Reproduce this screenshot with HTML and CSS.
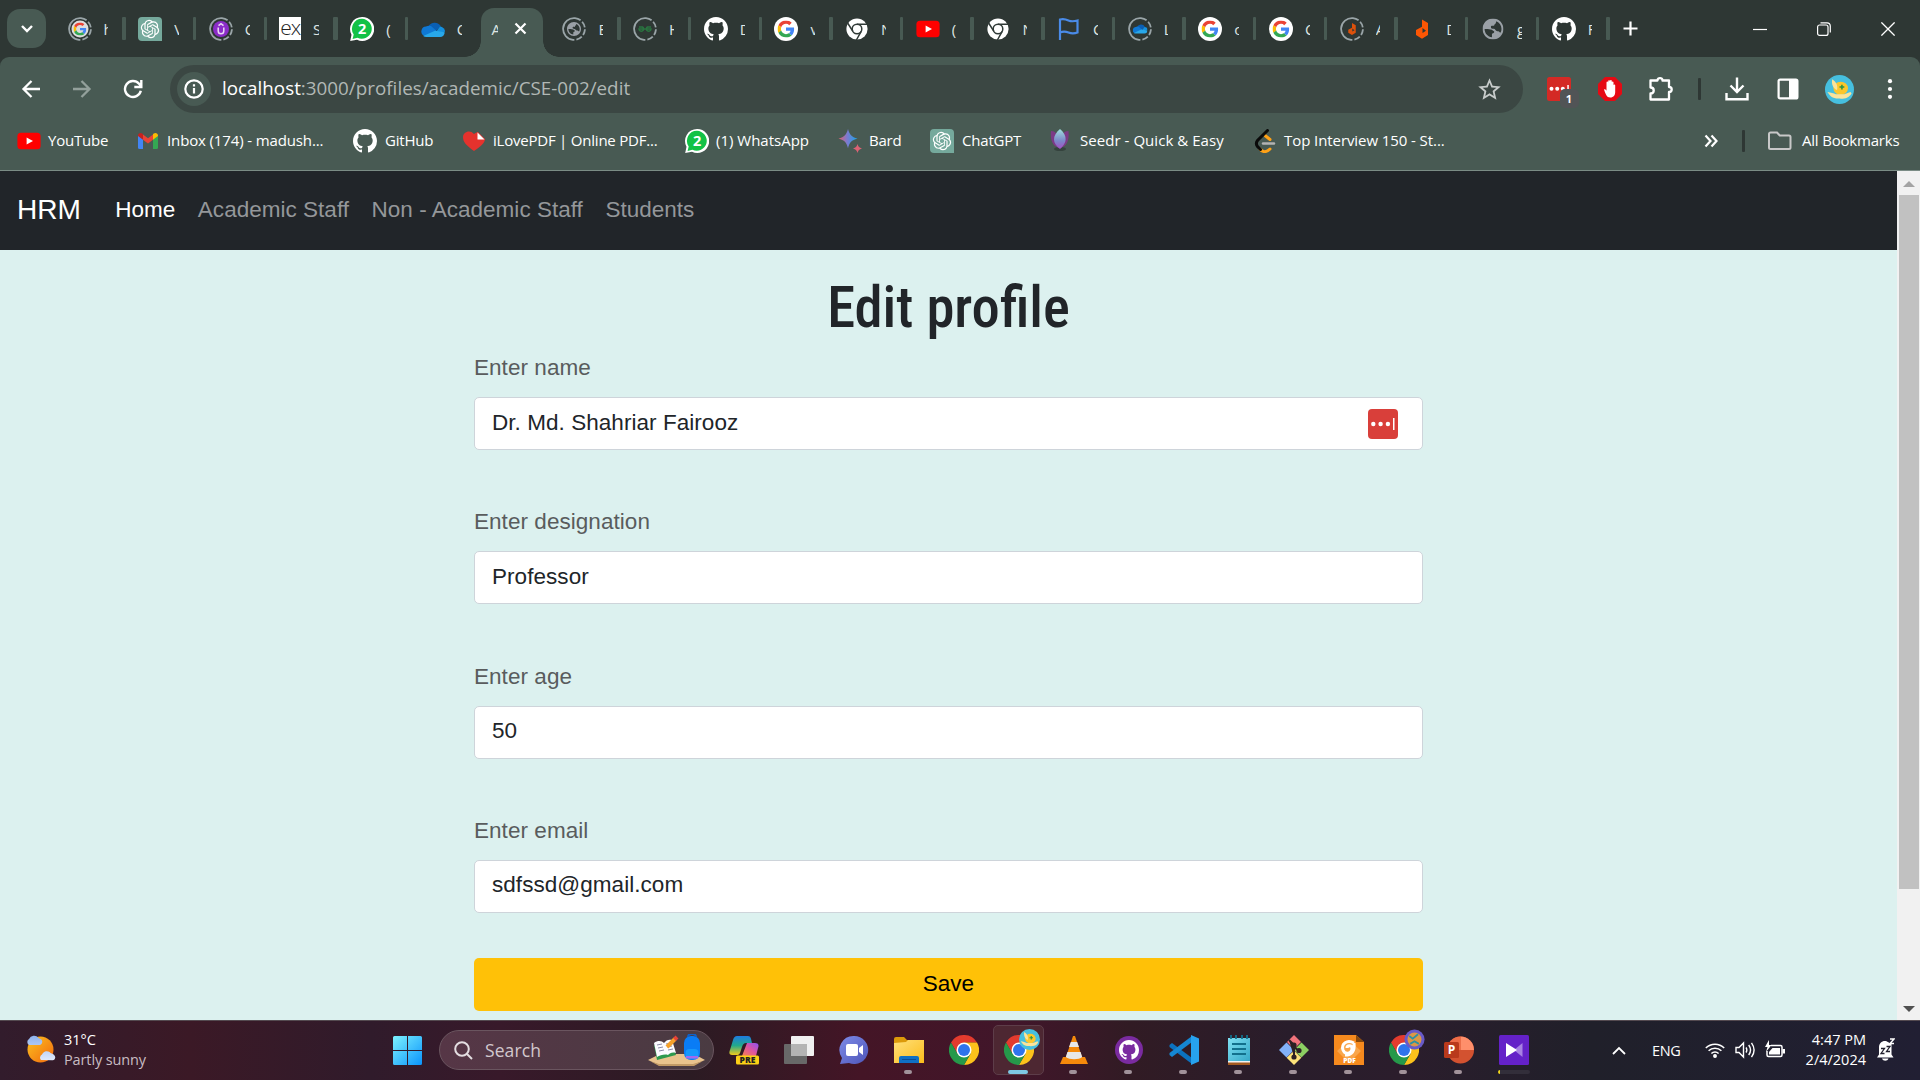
FILE: index.html
```
<!DOCTYPE html>
<html lang="en">
<head>
<meta charset="utf-8">
<title>Edit profile</title>
<link rel="stylesheet" href="styles.css">
</head>
<body>
<svg class="defs" width="0" height="0" aria-hidden="true">
  <defs>
    <linearGradient id="win" x1="0" y1="0" x2="1" y2="1"><stop offset="0" stop-color="#7df3ff"/><stop offset="1" stop-color="#0a93fb"/></linearGradient>
    <linearGradient id="bardg" x1="0" y1="0" x2="1" y2="0"><stop offset="0" stop-color="#e0606c"/><stop offset=".45" stop-color="#7c7ad0"/><stop offset="1" stop-color="#18a5e8"/></linearGradient>
    <linearGradient id="seed" x1="0" y1="0" x2="0" y2="1"><stop offset="0" stop-color="#9fe0dd"/><stop offset=".6" stop-color="#7b86c8"/><stop offset="1" stop-color="#a44fc4"/></linearGradient>
    <linearGradient id="sun" x1="0" y1="0" x2="1" y2="1"><stop offset="0" stop-color="#fcc321"/><stop offset="1" stop-color="#f2680c"/></linearGradient>
    <linearGradient id="cloud" x1="0" y1="0" x2="0" y2="1"><stop offset="0" stop-color="#8eb2ee"/><stop offset="1" stop-color="#dfe9fb"/></linearGradient>
    <linearGradient id="cop1" x1="0" y1="0" x2="0" y2="1"><stop offset="0" stop-color="#1e7be0"/><stop offset=".5" stop-color="#22a98c"/><stop offset="1" stop-color="#f1cc1c"/></linearGradient>
    <linearGradient id="cop2" x1="0" y1="1" x2="1" y2="0"><stop offset="0" stop-color="#f5824f"/><stop offset=".5" stop-color="#e0559c"/><stop offset="1" stop-color="#8c52f5"/></linearGradient>
    <linearGradient id="folderg" x1="0" y1="0" x2="1" y2="1"><stop offset="0" stop-color="#ffe07a"/><stop offset="1" stop-color="#fbbc1b"/></linearGradient>
    <linearGradient id="chatg" x1="0" y1="0" x2="1" y2="1"><stop offset="0" stop-color="#7d8be8"/><stop offset="1" stop-color="#4e55b8"/></linearGradient>
    <linearGradient id="noteg" x1="0" y1="0" x2="1" y2="1"><stop offset="0" stop-color="#7fe0f2"/><stop offset="1" stop-color="#35a8c8"/></linearGradient>

    <symbol id="google" viewBox="0 0 48 48"><path fill="#EA4335" d="M24 9.5c3.54 0 6.71 1.22 9.21 3.6l6.85-6.85C35.9 2.38 30.47 0 24 0 14.62 0 6.51 5.38 2.56 13.22l7.98 6.19C12.43 13.72 17.74 9.5 24 9.5z"/><path fill="#4285F4" d="M46.98 24.55c0-1.57-.15-3.09-.38-4.55H24v9.02h12.94c-.58 2.96-2.26 5.48-4.78 7.18l7.73 6c4.51-4.18 7.09-10.36 7.09-17.65z"/><path fill="#FBBC05" d="M10.53 28.59c-.48-1.45-.76-2.99-.76-4.59s.27-3.14.76-4.59l-7.98-6.19C.92 16.46 0 20.12 0 24c0 3.88.92 7.54 2.56 10.78l7.97-6.19z"/><path fill="#34A853" d="M24 48c6.48 0 11.93-2.13 15.89-5.81l-7.73-6c-2.15 1.45-4.92 2.3-8.16 2.3-6.26 0-11.57-4.22-13.47-9.91l-7.98 6.19C6.51 42.62 14.62 48 24 48z"/></symbol>
    <symbol id="googlew" viewBox="0 0 24 24"><circle cx="12" cy="12" r="12" fill="#fff"/><use href="#google" x="3.5" y="3.5" width="17" height="17"/></symbol>
    <symbol id="ring" viewBox="0 0 24 24"><circle cx="12" cy="12" r="10.9" fill="none" stroke="#9aa5a8" stroke-width="1.8" pathLength="100" stroke-dasharray="9 3 9 3 9 3 9 3 52 0" transform="rotate(-85 12 12)"/></symbol>
    <symbol id="github" viewBox="0 0 16 16"><path fill="#fff" d="M8 0C3.58 0 0 3.58 0 8c0 3.54 2.29 6.53 5.47 7.59.4.07.55-.17.55-.38 0-.19-.01-.82-.01-1.49-2.01.37-2.53-.49-2.69-.94-.09-.23-.48-.94-.82-1.13-.28-.15-.68-.52-.01-.53.63-.01 1.08.58 1.23.82.72 1.21 1.87.87 2.33.66.07-.52.28-.87.51-1.07-1.78-.2-3.64-.89-3.64-3.95 0-.87.31-1.59.82-2.15-.08-.2-.36-1.02.08-2.12 0 0 .67-.21 2.2.82.64-.18 1.32-.27 2-.27s1.36.09 2 .27c1.53-1.04 2.2-.82 2.2-.82.44 1.1.16 1.92.08 2.12.51.56.82 1.27.82 2.15 0 3.07-1.87 3.75-3.65 3.95.29.25.54.73.54 1.48 0 1.07-.01 1.93-.01 2.2 0 .21.15.46.55.38A8.01 8.01 0 0 0 16 8c0-4.42-3.58-8-8-8z"/></symbol>
    <symbol id="gpt" viewBox="0 0 24 24"><path fill="#75a99c" d="M4 0h16a4 4 0 0 1 4 4v20H4a4 4 0 0 1-4-4V4a4 4 0 0 1 4-4z"/><g transform="translate(2.8 2.8) scale(.766)"><path fill="#fff" d="M22.2819 9.8211a5.9847 5.9847 0 0 0-.5157-4.9108 6.0462 6.0462 0 0 0-6.5098-2.9A6.0651 6.0651 0 0 0 4.9807 4.1818a5.9847 5.9847 0 0 0-3.9977 2.9 6.0462 6.0462 0 0 0 .7427 7.0966 5.98 5.98 0 0 0 .511 4.9107 6.051 6.051 0 0 0 6.5146 2.9001A5.9847 5.9847 0 0 0 13.2599 24a6.0557 6.0557 0 0 0 5.7718-4.2058 5.9894 5.9894 0 0 0 3.9977-2.9001 6.0557 6.0557 0 0 0-.7475-7.0729zm-9.022 12.6081a4.4755 4.4755 0 0 1-2.8764-1.0408l.1419-.0804 4.7783-2.7582a.7948.7948 0 0 0 .3927-.6813v-6.7369l2.02 1.1686a.071.071 0 0 1 .038.052v5.5826a4.504 4.504 0 0 1-4.4945 4.4944zm-9.6607-4.1254a4.4708 4.4708 0 0 1-.5346-3.0137l.142.0852 4.783 2.7582a.7712.7712 0 0 0 .7806 0l5.8428-3.3685v2.3324a.0804.0804 0 0 1-.0332.0615L9.74 19.9502a4.4992 4.4992 0 0 1-6.1408-1.6464zM2.3408 7.8956a4.485 4.485 0 0 1 2.3655-1.9728V11.6a.7664.7664 0 0 0 .3879.6765l5.8144 3.3543-2.0201 1.1685a.0757.0757 0 0 1-.071 0l-4.8303-2.7865A4.504 4.504 0 0 1 2.3408 7.872zm16.5963 3.8558L13.1038 8.364 15.1192 7.2a.0757.0757 0 0 1 .071 0l4.8303 2.7913a4.4944 4.4944 0 0 1-.6765 8.1042v-5.6772a.79.79 0 0 0-.407-.667zm2.0107-3.0231l-.142-.0852-4.7735-2.7818a.7759.7759 0 0 0-.7854 0L9.409 9.2297V6.8974a.0662.0662 0 0 1 .0284-.0615l4.8303-2.7866a4.4992 4.4992 0 0 1 6.6802 4.66zM8.3065 12.863l-2.02-1.1638a.0804.0804 0 0 1-.038-.0567V6.0742a4.4992 4.4992 0 0 1 7.3757-3.4537l-.142.0805L8.704 5.459a.7948.7948 0 0 0-.3927.6813zm1.0976-2.3654l2.602-1.4998 2.6069 1.4998v2.9994l-2.5974 1.4997-2.6067-1.4997Z"/></g></symbol>
    <symbol id="whatsapp" viewBox="0 0 24 24"><path fill="#fff" d="M12 0a12 12 0 1 1-5 22.8L.2 24l1.3-6.2A12 12 0 0 1 12 0z"/><path fill="#12c246" d="M12 1.8a10 10 0 1 1-4.6 19L2.6 22l1.1-4.6A10 10 0 0 1 12 1.8z"/><text x="12.2" y="17.2" text-anchor="middle" font-family="Open Sans, sans-serif" font-size="14.5" font-weight="700" fill="#fff">2</text></symbol>
    <symbol id="onedrive" viewBox="0 0 24 24"><path fill="#0a5fb4" d="M7 10.5a7 7 0 0 1 12.8-1.2L14 15z"/><path fill="#0f78d4" d="M5 9.6A6 6 0 0 1 10 9l9 8-16 2A5 5 0 0 1 5 9.6z"/><path fill="#1490df" d="M19 9.6a5 5 0 0 1 5 5.2l-10 1.4z"/><path fill="#28a8ea" d="M2.2 19 14 13.7l9.7 1.6A4.6 4.6 0 0 1 19 20H5.5a5 5 0 0 1-3.3-1z"/></symbol>
    <symbol id="chromew" viewBox="0 0 24 24"><circle cx="12" cy="12" r="10.6" fill="#fff"/><g fill="none" stroke="#303a37" stroke-width="1.5"><circle cx="12" cy="12" r="4.8"/><path d="M12 7.2h10M7.9 14.4 2.6 6M16.2 14.4 11.4 23"/></g></symbol>
    <symbol id="chrome" viewBox="0 0 24 24"><path fill="#e33b2e" d="M12 6H22.4A12 12 0 0 0 1.6 6L6.8 15z"/><path fill="#fcc21b" d="M12 6H22.4A12 12 0 0 1 12 24L17.2 15z"/><path fill="#25994a" d="M1.6 6A12 12 0 0 0 12 24L17.2 15H6.8z"/><circle cx="12" cy="12" r="6" fill="#fff"/><circle cx="12" cy="12" r="4.8" fill="#2f74ec"/></symbol>
    <symbol id="youtube" viewBox="0 0 24 24"><rect x=".4" y="3.7" width="23.2" height="16.6" rx="3.5" fill="#f00"/><path fill="#fff" d="m9.6 8.5 6.4 3.5-6.4 3.5z"/></symbol>
    <symbol id="globe" viewBox="2 2 20 20"><path fill="currentColor" d="M12 2C6.480 2 2 6.480 2 12s4.480 10 10 10 10-4.480 10-10S17.520 2 12 2zm-1 17.930c-3.950-.490-7-3.850-7-7.930h3l4 .6c1 1.200 2.200 1 2.200 2.200s-2.200 1-2.200 2.100v3.030zm8.300-4.500c-1.100-.2-1.300-1.400-2.300-1.400h-1c-1.500 0-1.800-2.200-3.300-2.200-1.700 0-2.700-.3-2.700-1.800S11.500 9 12.600 9c1 0 .6-1.900 1.800-2l.8-2.300c2.900 1.200 4.900 4 4.900 7.300 0 1.200-.3 2.400-.8 3.430z"/></symbol>
    <symbol id="adon" viewBox="0 0 24 24"><path fill="#fc5604" d="M12 2.500 18 6v12l-6 3.700L6 18v-5l6-3.200zM12.500 11v5l3.500-2.200z" fill-rule="evenodd"/></symbol>
    <symbol id="bird" viewBox="0 0 24 24"><circle cx="12" cy="12" r="12" fill="#46bfdf"/><ellipse cx="13" cy="11" rx="6" ry="5.500" fill="#fbc62c"/><path fill="#fbe39a" d="M2 14c3 .5 5 1 7 2l7 0 5-2 1 1c-2 4-6 5-11 4.500-5 0-7-2.500-9-5.500zM6 3.500c3 2 5 5 4 9-3-1-5-5-4-9z"/><path stroke="#2a9444" stroke-width="1.300" d="M12 10h4m-2-2v4"/></symbol>
    <symbol id="meme" viewBox="0 0 24 24"><circle cx="12" cy="12" r="11.500" fill="#685ac8"/><circle cx="12" cy="12" r="8" fill="#dc9846"/><path stroke="#2b92a4" stroke-width="2" fill="none" d="m6 8 4 3 6-5M7 17l5-3 5 3"/></symbol>
  </defs>
</svg>

<header class="browser">
  <div class="tabstrip">
    <button class="tabsearch"><svg width="14" height="9" viewBox="0 0 14 9"><path d="m2 2 5 5 5-5" fill="none" stroke="#fff" stroke-width="2.400"/></svg></button>
    <div class="tab"><svg class="fav"><use href="#ring"/><circle cx="12" cy="12" r="8.500" fill="#ddd"/><use href="#google" x="5.500" y="5.500" width="13" height="13"/></svg><span>h</span></div>
    <div class="tab"><svg class="fav"><use href="#gpt"/></svg><span>V</span></div>
    <div class="tab"><svg class="fav"><use href="#ring"/><circle cx="12" cy="12" r="8" fill="#8b2cc8"/><path d="M9.200 10.500v3.500a2.800 2.800 0 0 0 5.600 0v-3.500M9.500 8.600 12 6.700l2.500 1.900" fill="none" stroke="#e9d8f5" stroke-width="1.500"/></svg><span>C</span></div>
    <div class="tab"><div class="exlogo">ex</div><span>S</span></div>
    <div class="tab"><svg class="fav"><use href="#whatsapp"/></svg><span>(</span></div>
    <div class="tab nosep"><svg class="fav"><use href="#onedrive"/></svg><span>C</span></div>
    <div class="tab active"><span>A</span><svg width="13" height="13" viewBox="0 0 13 13"><path d="m1.500 1.500 10 10m0-10-10 10" stroke="#fff" stroke-width="2.200"/></svg></div>
    <div class="tab"><svg class="fav dim"><use href="#ring"/><use href="#globe" x="5" y="5" width="14" height="14"/></svg><span>E</span></div>
    <div class="tab"><svg class="fav"><use href="#ring"/><path d="M6 10h3.500a2.300 2.300 0 1 1-3.500 2h12a2.300 2.300 0 1 1-3.500-2H18" fill="none" stroke="#2a7440" stroke-width="1.500"/></svg><span>H</span></div>
    <div class="tab"><svg class="fav"><use href="#github"/></svg><span>D</span></div>
    <div class="tab"><svg class="fav"><use href="#googlew"/></svg><span>v</span></div>
    <div class="tab"><svg class="fav"><use href="#chromew"/></svg><span>N</span></div>
    <div class="tab"><svg class="fav"><use href="#youtube"/></svg><span>(</span></div>
    <div class="tab"><svg class="fav"><use href="#chromew"/></svg><span>N</span></div>
    <div class="tab"><svg class="fav"><path d="M3 23V2.500c3-1 5-.7 8.500 1 3 1.300 5.500 1 9 0v12c-3.500 1.300-6 1.200-9 0-3.500-1.300-5.500-1.200-8.500 0" fill="none" stroke="#4a8be8" stroke-width="2.200"/></svg><span>C</span></div>
    <div class="tab"><svg class="fav"><use href="#ring"/><use href="#onedrive" x="4.500" y="4" width="15" height="15"/></svg><span>L</span></div>
    <div class="tab"><svg class="fav"><use href="#googlew"/></svg><span>c</span></div>
    <div class="tab"><svg class="fav"><use href="#googlew"/></svg><span>C</span></div>
    <div class="tab"><svg class="fav"><use href="#ring"/><use href="#adon" x="4.500" y="4.500" width="15" height="15" opacity=".85"/></svg><span>A</span></div>
    <div class="tab"><svg class="fav"><use href="#adon"/></svg><span>D</span></div>
    <div class="tab"><svg class="fav dim"><use href="#globe" x="1.500" y="1.500" width="21" height="21"/></svg><span>g</span></div>
    <div class="tab"><svg class="fav"><use href="#github"/></svg><span>F</span></div>
    <svg class="newtab" width="15" height="15" viewBox="0 0 15 15"><path d="M7.500 .5v14M.5 7.500h14" stroke="#fff" stroke-width="2.200"/></svg>
    <div class="winbtns">
      <svg width="14" height="14" viewBox="0 0 14 14"><path d="M0 7.500h14" stroke="#fff" stroke-width="1.200"/></svg>
      <svg width="14" height="14" viewBox="0 0 14 14" fill="none" stroke="#fff" stroke-width="1.200"><rect x=".6" y="3" width="10.400" height="10.400" rx="2"/><path d="M3.500 .8H10A3.300 3.300 0 0 1 13.300 4v6.500"/></svg>
      <svg width="14" height="14" viewBox="0 0 14 14"><path d="m.4.4 13.200 13.200m0-13.200L.4 13.600" stroke="#fff" stroke-width="1.300"/></svg>
    </div>
  </div>

  <div class="toolbar">
    <div class="navbtns">
      <svg width="20" height="20" viewBox="0 0 20 20" fill="none" stroke="#fff" stroke-width="2.300"><path d="M19 10H3M10.500 2 2.500 10l8 8"/></svg>
      <svg width="20" height="20" viewBox="0 0 20 20" fill="none" stroke="#93a09b" stroke-width="2.300"><path d="M1 10h16M9.500 2l8 8-8 8"/></svg>
      <svg width="20" height="20" viewBox="0 0 20 20" fill="none" stroke="#fff" stroke-width="2.400"><path d="M17.800 11.800A8 8 0 1 1 16 4.700L18 6.800M18.300 1v7h-7"/></svg>
    </div>
    <div class="omnibox">
      <div class="info"><svg width="20" height="20" viewBox="0 0 20 20"><circle cx="10" cy="10" r="8.700" fill="none" stroke="#fff" stroke-width="2.200"/><path d="M10 9v5.500M10 5.300v2.200" stroke="#fff" stroke-width="2.200"/></svg></div>
      <div class="url"><b>localhost</b>:3000/profiles/academic/CSE-002/edit</div>
      <svg class="star" width="27" height="27" viewBox="0 0 24 24"><path fill="#c8cccb" d="M22 9.240l-7.190-.620L12 2 9.190 8.630 2 9.240l5.460 4.730L5.820 21 12 17.270 18.180 21l-1.630-7.030L22 9.240zM12 15.400l-3.760 2.270 1-4.280-3.320-2.880 4.380-.380L12 6.100l1.710 4.040 4.380.380-3.320 2.880 1 4.280L12 15.400z"/></svg>
    </div>
    <div class="exts">
      <div class="ext"><svg width="24" height="24" viewBox="0 0 24 24"><rect width="24" height="24" rx="2.500" fill="#d42a25"/><g fill="#fff"><circle cx="4.500" cy="11.800" r="2"/><circle cx="10.200" cy="11.800" r="2"/><circle cx="15.800" cy="11.800" r="2"/><path d="M20.300 8h1.500v7h-1.500z"/></g></svg><span class="badge">1</span></div>
      <div class="ext"><svg width="24" height="24" viewBox="0 0 24 24"><path fill="#e60a14" d="M7 0h10l7 7v10l-7 7H7l-7-7V7z"/><path fill="#fff" d="M6 12.500c1.300-.8 2 .3 2.500 1.200V5.500c0-1.200 1.700-1.200 1.700 0V4.200c0-1.300 1.800-1.300 1.800 0v-.4c0-1.200 1.800-1.200 1.800 0v1.500c0-1.200 1.700-1.200 1.700 0v3c0-1.200 1.700-1.200 1.700 0V15c0 3-1.500 5.500-5 5.500-3.600 0-4.500-3.500-6.200-8z"/></svg></div>
      <div class="ext"><svg width="26" height="26" viewBox="0 0 26 26"><path fill="none" stroke="#fff" stroke-width="2.300" stroke-linejoin="round" d="M2.500 4.500H9.500C9.300 1.200 14.700 1.200 14.500 4.500H21V11C24.600 11 24.600 16 21 16V23.500H2.500V17.500C6.800 17.500 6.800 11.500 2.500 11.500Z"/></svg></div>
      <i class="divider"></i>
      <div class="ext"><svg width="24" height="24" viewBox="0 0 24 24"><path fill="none" stroke="#fff" stroke-width="2.400" d="M12 .500v14M5.500 8.500l6.500 6.500 6.500-6.500M1.500 16v6.300h21V16"/></svg></div>
      <div class="ext"><svg width="22" height="22" viewBox="0 0 22 22"><rect x="1.600" y="1.600" width="18.800" height="18.800" rx="1.500" fill="none" stroke="#fff" stroke-width="2.200"/><path fill="#fff" d="M12 1h8v20h-8z"/></svg></div>
      <div class="ext"><svg width="29" height="29"><use href="#bird"/></svg></div>
      <div class="ext"><svg width="6" height="20" viewBox="0 0 6 20" fill="#fff"><circle cx="3" cy="2.200" r="2.100"/><circle cx="3" cy="10" r="2.100"/><circle cx="3" cy="17.800" r="2.100"/></svg></div>
    </div>
  </div>

  <div class="bookmarks">
    <div class="bm b1"><svg class="fav"><use href="#youtube"/></svg><span>YouTube</span></div>
    <div class="bm b2"><svg class="fav" viewBox="0 0 24 24"><path fill="#4285f4" d="M2 6.500l5 3.800V20H3.500A1.500 1.500 0 0 1 2 18.500z"/><path fill="#34a853" d="M22 6.500l-5 3.800V20h3.500a1.500 1.500 0 0 0 1.500-1.500z"/><path fill="#ea4335" d="M7 5.500l5 3.800 5-3.800v5.300L12 14.600 7 10.800z"/><path fill="#c5221f" d="M2 6.700C2 4.200 4.600 3.300 6.300 4.600L7 5.200v5.600l-5-3.700z"/><path fill="#fbbc04" d="M22 6.700c0-2.500-2.600-3.400-4.300-2.100l-.7.600v5.600l5-3.700z"/></svg><span>Inbox (174) - madush...</span></div>
    <div class="bm b3"><svg class="fav"><use href="#github"/></svg><span>GitHub</span></div>
    <div class="bm b4"><svg class="fav" viewBox="0 0 24 24"><path fill="#e5322d" d="M12 22C4 16 1 13 1 8c0-5 7-8 11-3 3-2 4-2 4-2l7 7c0 4-5 8-11 12z"/><path fill="#fff" d="M15.500 3.500l7 7h-7z"/></svg><span>iLovePDF | Online PDF...</span></div>
    <div class="bm b5"><svg class="fav"><use href="#whatsapp"/></svg><span>(1) WhatsApp</span></div>
    <div class="bm b6"><svg class="fav" viewBox="0 0 24 24"><path fill="url(#bardg)" d="M10 0c1.500 5.500 3.500 8 9.500 9.600-6 1.600-8 4.100-9.500 9.600C8.500 13.700 6.500 11.200.5 9.600 6.500 8 8.500 5.500 10 0z"/><path fill="#dc6274" d="M19.500 15c.8 2.800 1.700 3.700 4.500 4.500-2.800.8-3.700 1.700-4.500 4.500-.8-2.800-1.700-3.700-4.500-4.500 2.800-.8 3.700-1.700 4.500-4.500z"/></svg><span>Bard</span></div>
    <div class="bm b7"><svg class="fav"><use href="#gpt"/></svg><span>ChatGPT</span></div>
    <div class="bm b8"><svg class="fav" viewBox="0 0 24 24"><ellipse cx="12" cy="20" rx="6" ry="2" fill="#35433e"/><path fill="#7c3a86" d="M3 2c6 0 8 6 8 17C5 17 2 12 3 2zM20.500 2c-6 0-8 6-8 17 6-2 9-7 8-17z"/><path fill="url(#seed)" d="M12 0c8 7 7 14 0 20C4 14 4 7 12 0z"/></svg><span>Seedr - Quick &amp; Easy</span></div>
    <div class="bm b9"><svg class="fav" viewBox="0 0 24 24" fill="none" stroke-width="3" stroke-linecap="round"><path stroke="#ffa116" d="M12 6.500l5 4M7 20c3 4 7 3 10 0"/><path stroke="#0a0a0a" d="M14.500 1.500L4.500 11.500c-1.500 2-1.500 4 0 6l3 3"/><path stroke="#b3b3b3" stroke-width="2.400" d="M10 14.500h11"/></svg><span>Top Interview 150 - St...</span></div>
    <div class="bmend">
      <svg width="14" height="14" viewBox="0 0 14 14" fill="none" stroke="#fff" stroke-width="2.200"><path d="m1.500 1.500 5 5.500-5 5.500m6-11 5 5.500-5 5.500"/></svg>
      <i class="divider"></i>
      <svg width="24" height="20" viewBox="0 0 24 20" fill="none" stroke="#c8c8c8" stroke-width="2"><path d="M2.500 1.500h6.500l2.700 3h9.300a1.500 1.500 0 0 1 1.500 1.500v10.500a1.500 1.500 0 0 1-1.500 1.500h-18.500a1.500 1.500 0 0 1-1.500-1.500V3a1.500 1.500 0 0 1 1.500-1.500z"/></svg>
      <span>All Bookmarks</span>
    </div>
  </div>
</header>

<div class="viewport">
  <div class="page">
    <nav class="navbar">
      <a class="brand">HRM</a>
      <a class="link current">Home</a><a class="link">Academic Staff</a><a class="link">Non - Academic Staff</a><a class="link">Students</a>
    </nav>
    <form class="profile">
      <h1>Edit profile</h1>
      <label>Enter name</label>
      <div class="field"><input value="Dr. Md. Shahriar Fairooz"><svg class="fill" width="30" height="30" viewBox="0 0 30 30"><rect width="30" height="30" rx="4" fill="#d93f3a"/><g fill="#fff"><circle cx="5.300" cy="15" r="2.200"/><circle cx="12.600" cy="15" r="2.200"/><circle cx="19.900" cy="15" r="2.200"/><path d="M25 9h1.500v12h-1.500z"/></g></svg></div>
      <label>Enter designation</label>
      <div class="field"><input value="Professor"></div>
      <label>Enter age</label>
      <div class="field"><input value="50"></div>
      <label>Enter email</label>
      <div class="field"><input value="sdfssd@gmail.com"></div>
      <button class="save" type="button">Save</button>
    </form>
  </div>
  <div class="scrollbar">
    <svg width="12" height="6" viewBox="0 0 12 6"><path fill="#a3a3a3" d="M0 6l6-6 6 6z"/></svg>
    <div class="thumb"></div>
    <svg width="12" height="6" viewBox="0 0 12 6"><path fill="#505050" d="M0 0l6 6 6-6z"/></svg>
  </div>
</div>

<footer class="taskbar">
  <div class="weather">
    <svg width="31" height="30" viewBox="0 0 31 30"><circle cx="15.500" cy="15.500" r="13" fill="url(#sun)"/><path fill="url(#cloud)" d="M4 11a3.500 3.500 0 0 1 0-6 5.500 5.500 0 0 1 9.500-1c2.500 1 4.500 2 3.500 5-.7 1.600-1.500 2-3 2zM16 26a3.500 3.500 0 0 1 1-5.500 5 5 0 0 1 8.500-1.500c3.500 1 5.500 3 4.500 5.500-.5 1.500-2 1.700-3 1.700z"/></svg>
    <div class="two"><span class="temp">31°C</span><span class="cond">Partly sunny</span></div>
  </div>
  <svg class="start" width="29" height="29" viewBox="0 0 29 29"><path fill="url(#win)" d="M1.500 0H14v14H0V1.500A1.500 1.500 0 0 1 1.500 0zM15 0h12.500A1.500 1.500 0 0 1 29 1.500V14H15zM0 15h14v14H1.500A1.500 1.500 0 0 1 0 27.500zM15 15h14v12.500a1.500 1.500 0 0 1-1.500 1.500H15z"/></svg>
  <div class="search">
    <svg width="19" height="19" viewBox="0 0 19 19" fill="none" stroke="#e4dee1" stroke-width="2"><circle cx="8" cy="8" r="6.800"/><path d="m13 13 5 5"/></svg>
    <span>Search</span>
    <svg class="art" width="57" height="32" viewBox="0 0 57 32"><path fill="#e9c38d" d="M0 26l12-6h34l11 6-12 5H11z"/><path fill="#c29a66" d="M2 27l9 3h34l10-3-9 5H11z"/><path fill="#2d9a4e" d="M6 11l3 15 19-5-1-3z"/><path fill="#fbfbff" d="M6 9c4-3 8-2 10 0 2-3 5-4 8-3l4 13c-4-1-6 0-8 2-3-1-8 0-11 2z"/><path stroke="#8b8ba8" stroke-width="1" d="M9 11l5-1m-4 4l5-1m-4 4l5-1m2-6l5-1m-4 4l5-1m-4 4l5-1"/><path stroke="#f5a02a" stroke-width="4" d="M19 13l8-8"/><path stroke="#e64238" stroke-width="4" d="M26.500 5.500L29 3"/><rect x="36" y="2" width="16" height="24" rx="7" fill="#0a7cf5"/><path d="M40 3c0-4 8-4 8 0" fill="none" stroke="#1060c8" stroke-width="2"/><rect x="37.500" y="15" width="13" height="10" rx="4" fill="#1598fc"/><path fill="#a06af0" d="M38 22h12v2.500H38z"/></svg>
  </div>
  <div class="apps">
    <div class="app"><svg viewBox="0 0 30 30"><path fill="url(#cop1)" d="M8 1h11c3 0 3 3 4 7h-6c-2 0-3 1-4 4l-2 6c-1 2-2 2-4 2H3c-3 0-3-3-2-5L4 5c1-3 2-4 4-4z"/><path fill="url(#cop2)" d="M18 8h8c4 0 4 3 3 5l-2 8H13z"/><rect x="7" y="20.500" width="23" height="9" rx="1.500" fill="#fcd116"/><text x="18.500" y="28" text-anchor="middle" font-family="Open Sans, sans-serif" font-size="8.500" font-weight="800" fill="#222">PRE</text></svg></div>
    <div class="app"><svg viewBox="0 0 30 30"><rect y="9" width="23" height="20" rx="1" fill="#686868"/><rect x="7" y="1" width="23" height="20" rx="1" fill="#f0f0f0"/><path fill="#b4b4b4" d="M7 9h16v12H7z"/></svg></div>
    <div class="app"><svg viewBox="0 0 30 30"><path fill="url(#chatg)" d="M15 1a14 14 0 1 1-5 27L1 29l2-6A14 14 0 0 1 15 1z"/><rect x="7" y="9" width="12" height="12" rx="2" fill="#fff"/><path fill="#fff" d="M20 13l4-3v10l-4-3z"/></svg></div>
    <div class="app run"><svg viewBox="0 0 30 30"><path fill="#dc9a0a" d="M0 4a2 2 0 0 1 2-2h8l3 3h15v5H0z"/><path fill="url(#folderg)" d="M0 8l12-1 2-2h16v23H0z"/><path fill="#0f70c4" d="M5 28v-5a2 2 0 0 1 2-2h16a2 2 0 0 1 2 2v5z"/><path fill="#0a4d96" d="M8 24h14v1H8z"/></svg></div>
    <div class="app"><svg><use href="#chrome"/></svg></div>
    <div class="app run on"><svg><use href="#chrome"/></svg><svg class="avatar"><use href="#bird"/></svg></div>
    <div class="app run"><svg viewBox="0 0 30 30"><path fill="#f58a0b" d="M4 22h22l3 7H1z"/><path fill="#f58a0b" d="M14 1h2l7 21c-3 3-13 3-16 0z"/><path fill="#e8e8e8" d="M11.800 7h6.400l1.800 5h-10zM8.400 17h13.200l1.600 5c-3 3-13 3-16.400 0z"/></svg></div>
    <div class="app run"><svg viewBox="0 0 30 30"><circle cx="15" cy="15" r="14" fill="#7a2ba0"/><use href="#github" x="5" y="5" width="20" height="20"/></svg></div>
    <div class="app run"><svg viewBox="0 0 30 30"><path fill="#0b72c0" d="M3 8L23 23v6L.5 12v-2z"/><path fill="#1587d4" d="M3 22L23 7V1L.5 18v2z"/><path fill="#27a2ee" d="M22 0l8 3.500v23L22 30z"/></svg></div>
    <div class="app run"><svg viewBox="0 0 30 30"><path fill="#a35a20" d="M4 27h22v3H4z"/><path fill="#f2f2f2" d="M4 25h22v2.500H4z"/><path fill="url(#noteg)" d="M4 3h22v23H4z"/><path stroke="#12708c" stroke-width="1.800" d="M8 9h14M8 14h14M8 19h14M7 0v4m5-4v4m6-4v4m5-4v4"/></svg></div>
    <div class="app run"><svg viewBox="0 0 30 30"><path fill="#f1737c" d="M15 0l7 7-7 7-7-7z"/><path fill="#82b1f8" d="M7.500 7.500L15 15l-7.500 7.500L0 15z"/><path fill="#8ccf62" d="M22.500 7.500L30 15l-7.500 7.500L15 15z"/><path fill="#fde27a" d="M15 15.500l7.300 7.200L15 30l-7.300-7.300z"/><g stroke="#2c2024" stroke-width="2" fill="#2c2024"><path d="M10 5l5 5v12m0-10l5 4"/><circle cx="15" cy="10" r="1.600"/><circle cx="20" cy="15.500" r="1.600"/><circle cx="15" cy="22" r="1.600"/></g></svg></div>
    <div class="app run"><svg viewBox="0 0 30 30"><path fill="#f68a1e" d="M0 0h22l8 7v23H0z"/><path fill="#f9a64b" d="M15 5l12 11-12 12L3 16z"/><path fill="#8a4a0c" d="M22 0v7h8z"/><path fill="none" stroke="#fff" stroke-width="3" d="M20 8c-7-4-13 1-11 7 2 5 9 4 9-2 0-3-5-3-5 0M20 8c1 8-2 12-9 12"/><text x="15.500" y="28" text-anchor="middle" font-family="Open Sans, sans-serif" font-size="6.500" font-weight="800" fill="#fff">PDF</text></svg></div>
    <div class="app run"><svg><use href="#chrome"/></svg><svg class="avatar"><use href="#meme"/></svg></div>
    <div class="app run"><svg viewBox="0 0 30 30"><circle cx="16.500" cy="15" r="13.500" fill="#d35230"/><path fill="#ff8f6b" d="M16.500 1.500A13.500 13.500 0 0 1 30 15H16.500z"/><path fill="#ed6c47" d="M16.500 1.500A13.500 13.500 0 0 0 3 15h13.500z"/><rect y="7" width="15" height="16" rx="1.500" fill="#b93a1c"/><text x="7.500" y="19.300" text-anchor="middle" font-family="Open Sans, sans-serif" font-size="12" font-weight="700" fill="#fff">P</text></svg></div>
    <div class="app load"><svg viewBox="0 0 30 30"><rect width="30" height="30" rx="1.500" fill="#6421c8"/><path fill="#a781e4" d="M23.500 8v14L15 15z"/><path fill="#fff" d="M7 8l11 7-11 7z"/></svg></div>
  </div>
  <div class="tray">
    <svg class="chev" width="14" height="9" viewBox="0 0 14 9"><path d="m1 8 6-6 6 6" fill="none" stroke="#fff" stroke-width="1.800"/></svg>
    <span class="lang">ENG</span>
    <svg class="wifi" width="20" height="16" viewBox="0 0 20 16" fill="none" stroke="#fff" stroke-width="1.500"><path d="M.8 6a13 13 0 0 1 18.400 0M3.600 8.800a9 9 0 0 1 12.800 0M6.400 11.600a5 5 0 0 1 7.200 0"/><circle cx="10" cy="14" r="1.200" fill="#fff"/></svg>
    <svg class="vol" width="20" height="18" viewBox="0 0 20 18" fill="none" stroke="#fff" stroke-width="1.400"><path d="M1 6.500h3L8.500 2v14L4 11.500H1zM11 6.500c1 1.500 1 3.500 0 5M13.700 4c2.200 3 2.200 7 0 10M16.500 1.800c3.200 4.500 3.200 10 0 14.400"/></svg>
    <svg class="bat" width="20" height="20" viewBox="0 0 20 20"><path d="M6 5.500h9.500A1.500 1.500 0 0 1 17 7v8a1.500 1.500 0 0 1-1.500 1.500h-12A1.500 1.500 0 0 1 2 15v-4" fill="none" stroke="#fff" stroke-width="1.500"/><path fill="#fff" d="M7.500 8H15v6.500H4V12zM17.500 9H20v4.500h-2.500zM4 0L0 7h2.500L1 12l5.500-7H4z"/></svg>
    <div class="clock"><span>4:47 PM</span><span>2/4/2024</span></div>
    <svg class="bell" width="18" height="24" viewBox="0 0 18 24"><path fill="#fff" d="M2 16.500V9.500C2 5 5 2.500 9 3l5.500 3v10.500l2 3H0zM5 20.500h6.500c-1 3-5.500 3-6.500 0z"/><path fill="none" stroke="#22202e" stroke-width="1.300" d="M4 10.500h3.500L4 15.500h3.500M9.500 8.500H13l-3.500 5H13"/><path fill="none" stroke="#fff" stroke-width="1.400" d="M13 1h4l-4 4.500h4"/></svg>
  </div>
</footer>
</body>
</html>
```
FILE: styles.css
```
* { box-sizing: border-box; }
body {
  margin: 0;
  width: 1920px;
  height: 1080px;
  overflow: hidden;
  display: flex;
  flex-direction: column;
  font-family: "Open Sans", "Noto Sans", sans-serif;
  color: #fff;
}
svg { display: block; flex: none; }
.defs { position: absolute; }
.fav { width: 24px; height: 24px; }
.dim { color: #9aa0a6; }

/* browser chrome */
.browser {
  height: 171px;
  flex: none;
  background: #2e3734;
  border-bottom: 1px solid #7b8c85;
}
.tabstrip { display: flex; height: 57px; }
.tabsearch {
  width: 39px;
  height: 39px;
  margin: 9px 9px 0 7px;
  padding: 0;
  border: 0;
  border-radius: 13px;
  background: #485a53;
  display: flex;
  align-items: center;
  justify-content: center;
}
.tab {
  width: 70.67px;
  flex: none;
  height: 57px;
  padding-left: 12.500px;
  display: flex;
  align-items: center;
  gap: 12px;
  position: relative;
  font-size: 15px;
}
.tab span {
  width: 7px;
  overflow: hidden;
  white-space: nowrap;
  color: #dfe5e2;
}
.tab::after {
  content: "";
  width: 5px;
  height: 23px;
  margin-left: 2px;
  border-radius: 1px;
  background: #485a53;
}
.tab.nosep::after { visibility: hidden; }
.tab.active {
  width: 62px;
  height: 49px;
  margin: 8px 6.500px 0 2.500px;
  padding: 0 0 8px 10px;
  gap: 16px;
  border-radius: 13px 13px 0 0;
  background: #485a53;
}
/* flared feet on either side of the active tab */
.tab.active::before, .tab.active::after {
  content: "";
  position: absolute;
  bottom: 0;
  width: 16px;
  height: 16px;
  margin: 0;
  border-radius: 0;
}
.tab.active::before { left: -16px; background: radial-gradient(circle at 0 0, transparent 15.5px, #485a53 16px); }
.tab.active::after { right: -16px; background: radial-gradient(circle at 100% 0, transparent 15.5px, #485a53 16px); }
.exlogo {
  width: 24px;
  height: 23px;
  background: #fff;
  color: #222;
  font: 300 21px/20px "Open Sans", sans-serif;
  letter-spacing: -1px;
  text-align: center;
}
.newtab { align-self: center; margin-left: 13px; }
.winbtns { display: flex; align-items: center; gap: 50px; margin-left: auto; padding-right: 25px; }

.toolbar {
  height: 64px;
  display: flex;
  align-items: center;
  background: #485a53;
  border-radius: 9px 9px 0 0;
}
.navbtns { display: flex; gap: 31px; width: 170px; padding-left: 21px; }
.omnibox {
  width: 1353px;
  height: 48px;
  display: flex;
  align-items: center;
  padding: 0 20px 0 7px;
  border-radius: 24px;
  background: #3b4743;
}
.info {
  width: 34px;
  height: 34px;
  border-radius: 50%;
  background: #485a53;
  display: flex;
  align-items: center;
  justify-content: center;
}
.url { margin-left: 11px; padding-bottom: 2px; font-size: 18.800px; letter-spacing: 0.020px; color: #b1b8b5; white-space: nowrap; }
.url b { font-weight: 400; color: #fff; }
.star { margin-left: auto; }
.exts { display: flex; align-items: center; padding-left: 10.500px; }
.ext { width: 51px; display: flex; justify-content: center; position: relative; }
.badge {
  position: absolute;
  left: 26px;
  top: 12px;
  width: 19px;
  height: 19px;
  border-radius: 5px;
  background: #515456;
  font: 700 11px/19px "Open Sans", sans-serif;
  text-align: center;
}
.divider { width: 3px; height: 22px; background: #2e3734; border-radius: 1px; }
.exts .divider { margin: 0 11px; }

.bookmarks {
  height: 49px;
  display: flex;
  align-items: center;
  padding: 0 20px 9px 17px;
  background: #485a53;
  font-size: 15px;
  letter-spacing: -0.2px;
}
.bm { display: flex; align-items: center; gap: 7px; margin-right: 28px; white-space: nowrap; flex: none; }
.bm span, .bmend span { padding-bottom: 2px; }
.b1 { width: 91px; }
.b2 { width: 189px; letter-spacing: -0.130px; }
.b3 { width: 81px; }
.b4 { width: 195px; letter-spacing: -0.220px; }
.b5 { width: 125px; letter-spacing: 0; }
.b6 { width: 64px; }
.b7 { width: 90px; }
.b8 { width: 177px; letter-spacing: 0.050px; }
.b9 { width: 192px; letter-spacing: -0.080px; }
.b3 svg, .b7 svg, .b8 svg { margin-right: 1px; }
.bmend { margin-left: auto; display: flex; align-items: center; white-space: nowrap; }
.bmend .divider { margin: 0 23px 0 24px; }
.bmend span { margin-left: 10px; width: 98px; }

/* web page */
.viewport { flex: 1; display: flex; min-height: 0; }
.page { width: 1897px; background: #dcf1ef; overflow: hidden; font: 22.500px/1.500 "Liberation Sans", Arial, sans-serif; }
.navbar { height: 79px; padding-left: 17px; background: #212529; display: flex; align-items: center; }
.brand { font-size: 28.100px; margin-right: 23px; }
.link { padding: 0 11.250px 2px; color: #94979a; letter-spacing: 0.020px; }
.current { color: #fff; }
.profile { width: 949px; margin: 0 auto; }
h1 {
  margin: 24px 0 10px;
  font: 500 56.600px/67px "Roboto Condensed", Roboto, sans-serif;
  font-stretch: 75%;
  color: #212529;
  text-align: center;
}
label { display: block; height: 34px; margin-bottom: 12px; color: #595c5d; letter-spacing: 0.050px; }
.field { position: relative; height: 53px; margin-bottom: 55.330px; }
input {
  display: block;
  width: 100%;
  height: 53px;
  padding: 0 17px 2px;
  border: 1px solid #ced4da;
  border-radius: 5px;
  background: #fff;
  font: inherit;
  letter-spacing: 0.050px;
  color: #212529;
}
.fill { position: absolute; right: 25px; top: 12px; }
.save {
  display: block;
  width: 100%;
  height: 53px;
  margin-top: -10.330px;
  padding: 0 0 1px;
  border: 0;
  border-radius: 5px;
  background: #ffc107;
  font: inherit;
  color: #000;
}
.scrollbar {
  width: 23px;
  padding: 10px 1px 8px 2px;
  background: #f1f1f1;
  display: flex;
  flex-direction: column;
  align-items: center;
}
.thumb { width: 20px; height: 694px; margin: 8px 0 auto; background: #c1c1c1; }

/* taskbar */
.taskbar {
  height: 60px;
  flex: none;
  display: flex;
  align-items: center;
  padding-bottom: 1px;
  border-top: 1px solid #544a50;
  background: linear-gradient(90deg, #321c2c 0, #3b1926 190px, #301b2b 370px, #38192a 500px, #2b1b23 690px, #441526 860px, #41162a 1020px, #311b24 1130px, #291d2b 1290px, #2b1d2c 1400px, #20202a 1590px, #211f33 1920px);
  white-space: nowrap;
}
.weather { width: 393px; padding: 0 0 2px 25px; display: flex; align-items: center; gap: 8px; }
.two { display: flex; flex-direction: column; font-size: 14.500px; line-height: 20px; padding-top: 1px; }
.cond { color: #c8bdc3; letter-spacing: -0.120px; }
.search {
  width: 275px;
  height: 40px;
  margin-left: 17px;
  padding: 0 8px 0 14px;
  display: flex;
  align-items: center;
  border: 1px solid #6a555f;
  border-radius: 20px;
  background: linear-gradient(90deg, #563646, #4a3b42);
}
.search span { margin-left: 12px; font-size: 17.500px; color: #d2c8cd; letter-spacing: 0.100px; }
.art { margin-left: auto; }
.apps { display: flex; margin-left: 2px; }
.app { width: 55px; height: 50px; position: relative; display: flex; justify-content: center; align-items: center; }
.app svg { width: 30px; height: 30px; }
.app .avatar { position: absolute; width: 21px; height: 21px; left: 28px; top: 4px; }
.on::before {
  content: "";
  position: absolute;
  inset: 0 2px;
  border: 1px solid #5d3d49;
  border-radius: 5px;
  background: #4d2732;
}
.on svg { position: relative; }
.run::after {
  content: "";
  position: absolute;
  bottom: 1px;
  left: 23px;
  width: 8px;
  height: 4px;
  border-radius: 2px;
  background: #a1929a;
}
.on::after { left: 17px; width: 20px; background: #7ec8e4; }
.load::after {
  content: "";
  position: absolute;
  bottom: 1px;
  left: 12px;
  width: 30px;
  height: 4px;
  border-left: 2px solid #f1d61c;
  border-radius: 2px;
  background: #322e3a;
}
.tray { margin-left: auto; padding-right: 25px; display: flex; align-items: center; font-size: 14.500px; }
.lang { margin: 0 23px 0 26px; width: 30px; letter-spacing: -0.300px; }
.wifi { margin-right: 10px; }
.vol { margin-right: 10px; }
.clock { width: 81px; display: flex; flex-direction: column; align-items: flex-end; line-height: 20px; margin-right: 11px; }
```
